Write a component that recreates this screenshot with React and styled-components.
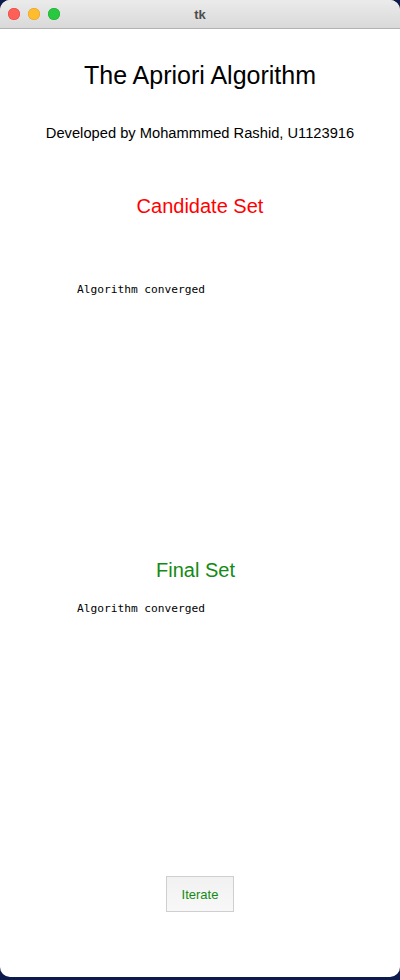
import styled, { createGlobalStyle } from "styled-components";

const GlobalStyle = createGlobalStyle`
  html, body {
    margin: 0;
    padding: 0;
    background: #0d1a4c;
  }
  body {
    font-family: "Liberation Sans", Arial, sans-serif;
  }
`;

const Window = styled.div`
  width: 400px;
  height: 977px;
  background: #ffffff;
  border-radius: 10px;
  overflow: hidden;
  display: flex;
  flex-direction: column;
`;

const TitleBar = styled.div`
  height: 28px;
  flex-shrink: 0;
  background: linear-gradient(#ebebeb, #d9d9d9);
  border-bottom: 1px solid #b2b2b2;
  display: flex;
  align-items: center;
  position: relative;
  padding-left: 8px;
  gap: 8px;
`;

const Light = styled.span`
  width: 12px;
  height: 12px;
  border-radius: 50%;
  background: ${(p) => p.color};
  box-shadow: inset 0 0 0 0.5px ${(p) => p.edge};
`;

const WindowTitle = styled.div`
  position: absolute;
  left: 0;
  right: 0;
  text-align: center;
  font-size: 13px;
  font-weight: bold;
  color: #4d4d4d;
  pointer-events: none;
`;

const Content = styled.div`
  flex: 1;
  display: flex;
  flex-direction: column;
  align-items: center;
`;

const Heading = styled.h1`
  margin: 32px 0 0;
  font-size: 25px;
  line-height: 28px;
  font-weight: normal;
  color: #000;
`;

const Subheading = styled.div`
  margin-top: 35px;
  font-size: 14.7px;
  line-height: 18px;
  color: #000;
`;

const SetTitle = styled.div`
  margin-top: ${(p) => p.top}px;
  margin-right: ${(p) => p.shift || 0}px;
  font-size: 20px;
  line-height: 24px;
  color: ${(p) => p.color};
`;

const Output = styled.pre`
  align-self: stretch;
  margin: ${(p) => p.top}px 0 0 77px;
  font-family: "DejaVu Sans Mono", "Liberation Mono", monospace;
  font-size: 11.2px;
  line-height: 13px;
  color: #000;
  height: ${(p) => p.h}px;
`;

const Button = styled.button`
  margin-top: ${(p) => p.top}px;
  width: 68px;
  height: 36px;
  border: 1px solid #cfcfcf;
  background: linear-gradient(#f1f1f1, #f8f8f8);
  color: #148a14;
  font-family: "Liberation Sans", Arial, sans-serif;
  font-size: 13px;
  padding: 0;
`;

export default function App() {
  return (
    <>
      <GlobalStyle />
      <Window>
        <TitleBar>
          <Light color="#fe5f57" edge="#e0443e" />
          <Light color="#febc2e" edge="#dea123" />
          <Light color="#28c840" edge="#1aab29" />
          <WindowTitle>tk</WindowTitle>
        </TitleBar>
        <Content>
          <Heading>The Apriori Algorithm</Heading>
          <Subheading>Developed by Mohammmed Rashid, U1123916</Subheading>
          <SetTitle top={52} color="#ff0000">
            Candidate Set
          </SetTitle>
          <Output top={65} h={275}>Algorithm converged</Output>
          <SetTitle top={0} shift={9} color="#138a13">
            Final Set
          </SetTitle>
          <Output top={20} h={274}>Algorithm converged</Output>
          <Button top={0}>Iterate</Button>
        </Content>
      </Window>
    </>
  );
}
